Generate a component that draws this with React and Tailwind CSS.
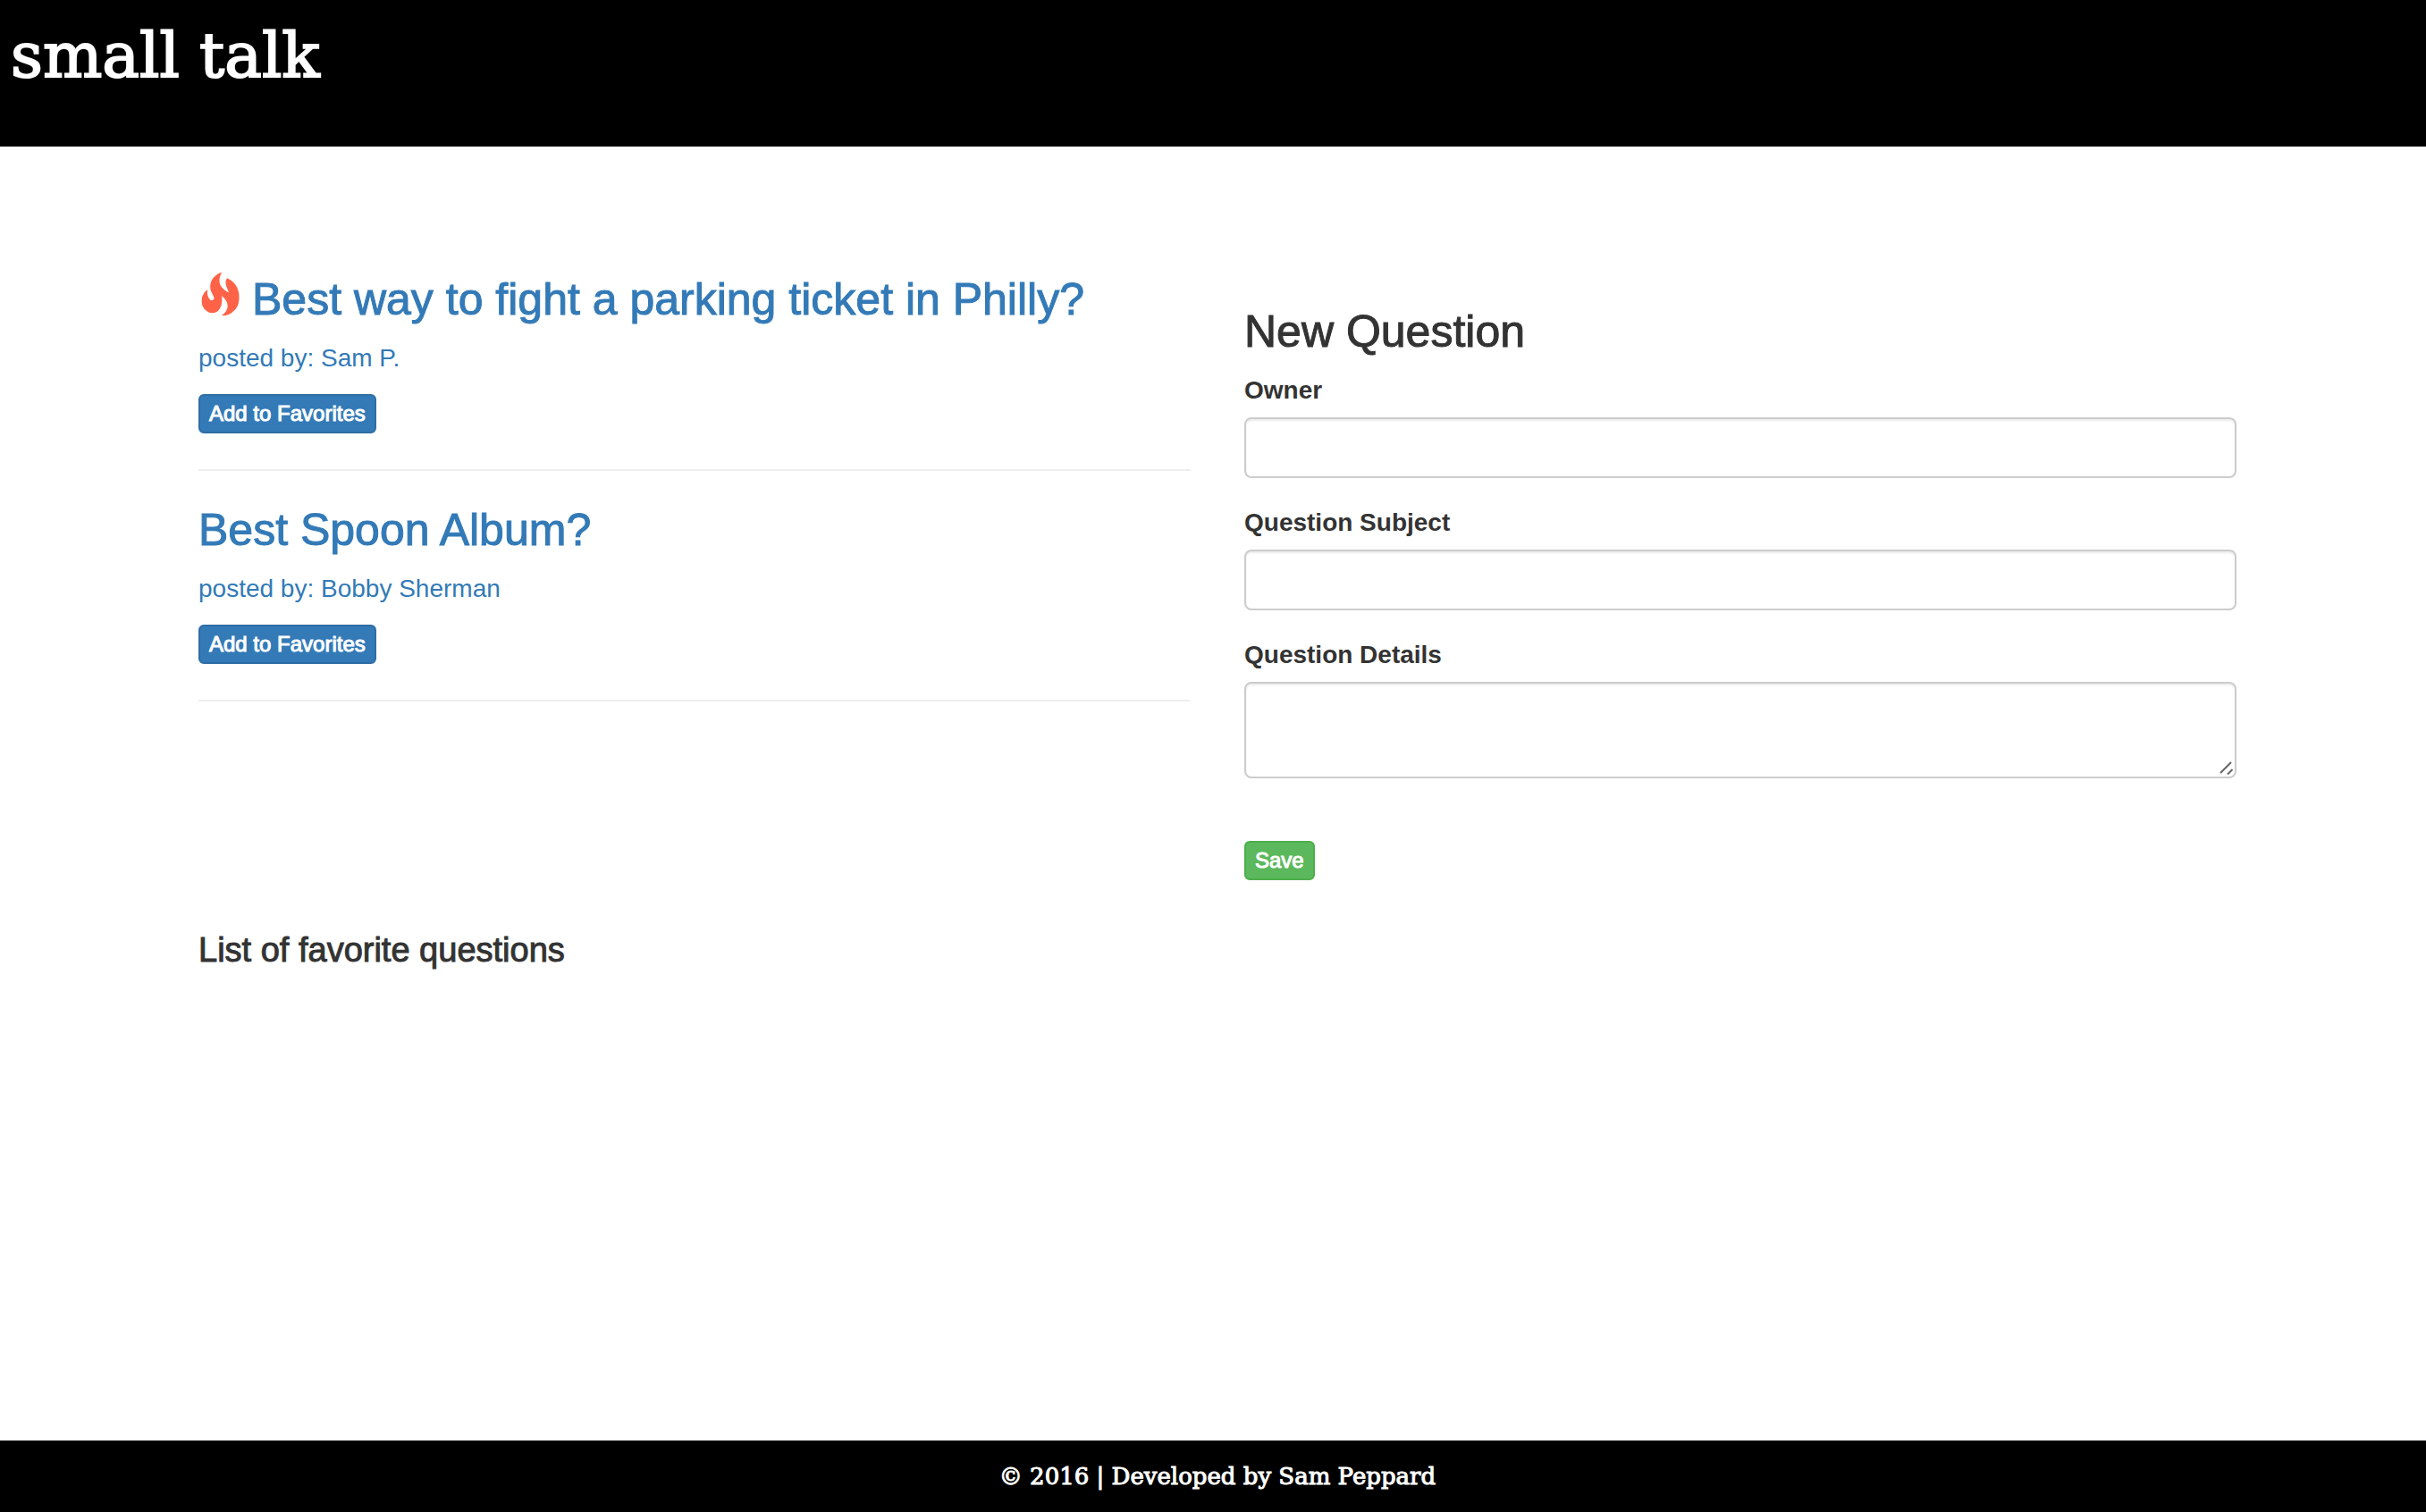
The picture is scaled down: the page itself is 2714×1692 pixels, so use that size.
import React from "react";

const questions = [
  { title: "Best way to fight a parking ticket in Philly?", owner: "Sam P.", hot: true },
  { title: "Best Spoon Album?", owner: "Bobby Sherman", hot: false },
];

function FireIcon() {
  return (
    <svg aria-hidden="true" viewBox="0 0 1200 1200" className="size-12 shrink-0 overflow-visible fill-[#ff6347]">
      <path
        transform="matrix(1 0 0 -1 0 1080)"
        d="M653 1231q-39 -67 -54.5 -131t-10.5 -114.5t24.5 -96.5t47.5 -80t63.5 -62.5t68.5 -46.5t65 -30q-4 7 -17.5 35t-18.5 39.5t-17 39.5t-17 43t-13 42t-9.5 44.5t-2 42t4 43t13.5 39t23 38.5q96 -42 165 -107.5t105 -138t52 -156t13 -159t-19 -149.5q-13 -55 -44 -106.5t-68 -87t-78.5 -64.5t-72.5 -45t-53 -22q-72 -22 -127 -11q-31 6 -13 19q6 3 17 7q13 5 32.5 21t41 44t38.5 63.5t21.5 81.5t-6.5 94.5t-50 107t-104 115.5q10 -104 -0.5 -189t-37 -140.5t-65 -93t-84 -52t-93.5 -11t-95 24.5q-80 36 -131.5 114t-53.5 171q-2 23 0 49.5t4.5 52.5t13.5 56t27.5 60t46 64.5t69.5 68.5q-8 -53 -5 -102.5t17.5 -90t34 -68.5t44.5 -39t49 -2q31 13 38.5 36t-4.5 55t-29 64.5t-36 75t-26 75.5q-15 85 2 161.5t53.5 128.5t85.5 92.5t93.5 61t81.5 25.5z"
      />
    </svg>
  );
}

function Question({ title, owner, hot }) {
  return (
    <article className="border-b-2 border-[#eeeeee] pb-10">
      <a href="#question" className="block text-[#337ab7]">
        <h3 className="flex items-center gap-3 text-[50px] leading-[52px] [-webkit-text-stroke:1px_#337ab7]">
          {hot && <FireIcon />}
          {title}
        </h3>
        <p className="mt-5 leading-10">posted by: {owner}</p>
      </a>
      <button
        type="button"
        className="mt-5 block h-11 rounded-md border-2 border-[#2e6da4] bg-[#337ab7] px-2.5 text-[24px] leading-9 text-white [-webkit-text-stroke:1px_white]"
      >
        Add to Favorites
      </button>
    </article>
  );
}

const fieldClass =
  "mt-2.5 block w-full rounded-lg border-2 border-[#cccccc] bg-white px-6 py-3 text-[28px] text-[#555555] shadow-[inset_0_2px_2px_rgba(0,0,0,0.075)]";

function Field({ id, label }) {
  return (
    <div className="mb-[30px]">
      <label htmlFor={id} className="block font-bold leading-10">
        {label}
      </label>
      <input id={id} type="text" className={fieldClass + " h-[68px]"} />
    </div>
  );
}

export default function App() {
  return (
    <div className="flex min-h-screen flex-col bg-white font-['Liberation_Sans',Arial,sans-serif] text-[28px] leading-10 text-[#333333]">
      <header className="h-[164px] bg-black px-3 pt-5">
        <h1 className="font-['DejaVu_Serif',serif] text-[70px] leading-[84px] text-white [-webkit-text-stroke:2px_white]">
          small talk
        </h1>
      </header>

      <div className="grow pl-2.5">
        <main className="mx-auto max-w-[2340px] pt-[145px]">
          <div className="grid grid-cols-2">
            <section className="flex flex-col gap-10 px-[30px]">
              {questions.map((q) => (
                <Question key={q.title} {...q} />
              ))}
            </section>

            <form className="px-[30px] pt-9" onSubmit={(e) => e.preventDefault()}>
              <h3 className="mb-5 text-[50px] leading-[52px] [-webkit-text-stroke:1px_#333333]">New Question</h3>
              <Field id="owner" label="Owner" />
              <Field id="subject" label="Question Subject" />
              <div className="relative">
                <label htmlFor="details" className="block font-bold leading-10">
                  Question Details
                </label>
                <textarea id="details" className={fieldClass + " h-[108px] resize-none"} />
                <svg
                  aria-hidden="true"
                  viewBox="0 0 16 16"
                  className="pointer-events-none absolute right-1 bottom-1 size-4 fill-none stroke-[#666666] stroke-2"
                >
                  <path d="M2 14 14 2M10 15.5 15.5 10" />
                </svg>
              </div>
              <button
                type="submit"
                className="mt-[70px] block h-11 rounded-md border-2 border-[#4cae4c] bg-[#5cb85c] px-2.5 text-[24px] leading-9 text-white [-webkit-text-stroke:1px_white]"
              >
                Save
              </button>
            </form>
          </div>

          <section className="px-[30px] pt-[58px]">
            <h4 className="text-[38px] leading-10 [-webkit-text-stroke:1px_#333333]">List of favorite questions</h4>
          </section>
        </main>
      </div>

      <footer className="h-20 bg-black pt-5 pl-2.5 text-center font-['DejaVu_Serif',serif] text-[26px] leading-10 text-white [-webkit-text-stroke:1px_white]">
        © 2016 | Developed by Sam Peppard
      </footer>
    </div>
  );
}
